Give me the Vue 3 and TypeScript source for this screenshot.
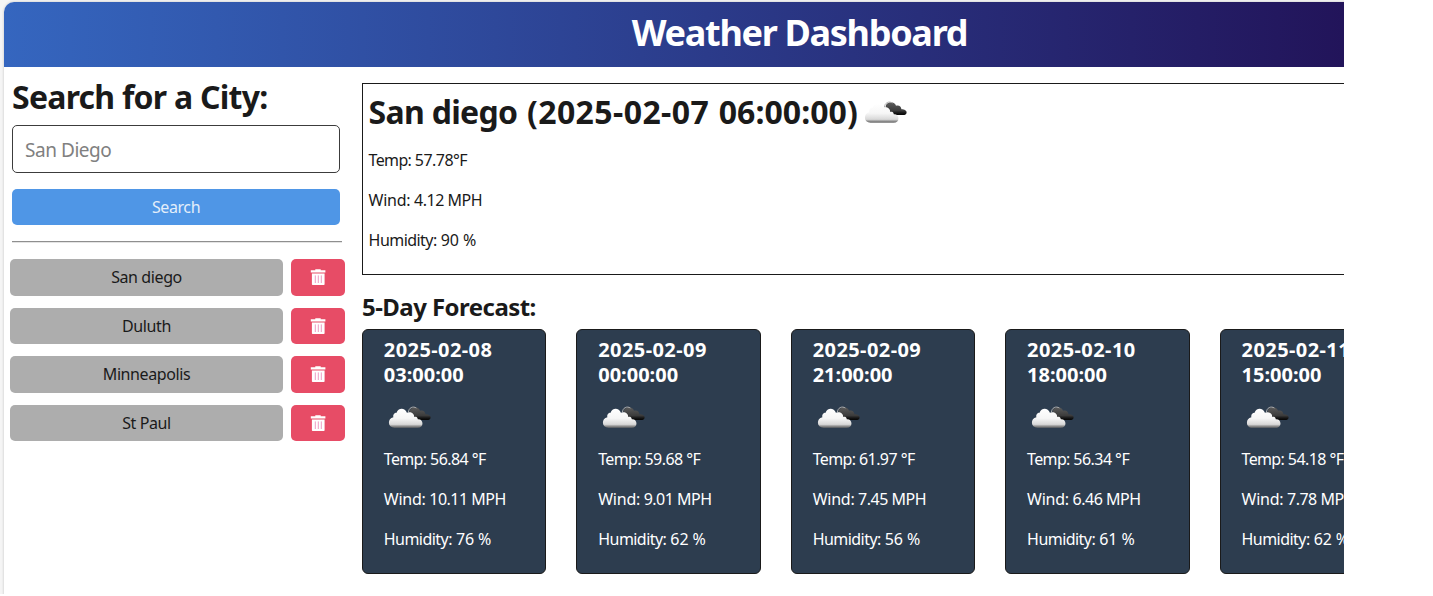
<script setup lang="ts">
interface Forecast {
  day: string
  time: string
  temp: string
  wind: string
  humidity: string
}

const history: string[] = ['San diego', 'Duluth', 'Minneapolis', 'St Paul']

const forecasts: Forecast[] = [
  { day: '2025-02-08', time: '03:00:00', temp: '56.84', wind: '10.11', humidity: '76' },
  { day: '2025-02-09', time: '00:00:00', temp: '59.68', wind: '9.01', humidity: '62' },
  { day: '2025-02-09', time: '21:00:00', temp: '61.97', wind: '7.45', humidity: '56' },
  { day: '2025-02-10', time: '18:00:00', temp: '56.34', wind: '6.46', humidity: '61' },
  { day: '2025-02-11', time: '15:00:00', temp: '54.18', wind: '7.78', humidity: '62' },
]
</script>

<template>
  <div class="viewport">
    <svg class="defs" width="0" height="0" aria-hidden="true">
      <defs>
        <linearGradient id="cloud-light" x1="0" y1="0" x2="0" y2="1">
          <stop offset="0" stop-color="#ffffff" />
          <stop offset="0.5" stop-color="#f6f6f6" />
          <stop offset="0.82" stop-color="#d8d8d8" />
          <stop offset="0.92" stop-color="#8c8c8c" />
          <stop offset="1" stop-color="#6a6a6a" />
        </linearGradient>
        <linearGradient id="cloud-dark" x1="0" y1="0" x2="0" y2="1">
          <stop offset="0" stop-color="#5c5c5c" />
          <stop offset="0.65" stop-color="#3c3c3c" />
          <stop offset="0.85" stop-color="#151515" />
          <stop offset="1" stop-color="#050505" />
        </linearGradient>
        <symbol id="clouds" viewBox="0 0 50 50">
          <path d="M26 22C24.5 17 28.5 15 31.5 15.2C34 15.4 35.6 17 36 18.8C39 17.8 41.2 19.6 41.4 22.2C44.6 22.2 46.8 23.6 46.6 25.4C46.5 27.2 45 28 43 28H33Z" fill="url(#cloud-dark)" />
          <path d="M24.4 20.5C24.6 15.6 29 13.8 32.4 16" fill="none" stroke="#b0b0b0" stroke-width="1" />
          <path d="M10.5 35.8C3.3 35.8 3.2 26.4 9.4 25.3C8.6 22.6 10.8 20.6 12.6 20.8C14 15.6 21 15.4 22.9 20.8C26 19 30.4 21 30.2 25C31.6 24.6 33.4 24.8 33.8 27.2C39.6 26.6 40.6 35.8 33.6 35.8Z" fill="url(#cloud-light)" />
        </symbol>
      </defs>
    </svg>
    <div class="app">
      <header class="banner"><h1>Weather Dashboard</h1></header>
      <div class="body">
        <aside class="sidebar">
          <h2 class="search-title">Search for a City:</h2>
          <input class="city-input" type="text" placeholder="San Diego" />
          <button class="search-btn" type="button">Search</button>
          <div class="divider"></div>
          <div class="history">
            <div v-for="city in history" :key="city" class="history-row">
              <button class="city-btn" type="button">{{ city }}</button>
              <button class="delete-btn" type="button" aria-label="Delete">
                <svg width="16" height="18" viewBox="0 0 16 18">
                  <path d="M5.3 1.2H10.7V2.2H15.4V4.4H0.8V2.2H5.3Z" fill="#fff" />
                  <path d="M1.9 5.4H14.6V16.2Q14.6 17 13.8 17H2.7Q1.9 17 1.9 16.2Z" fill="#fff" />
                  <path d="M5.3 7.4V15M8.3 7.4V15M11.3 7.4V15" stroke="#ee9cc4" stroke-width="1" />
                </svg>
              </button>
            </div>
          </div>
        </aside>
        <main class="content">
          <section class="today">
            <h2 class="today-title">
              <span class="today-name">San diego <span class="today-date">(2025-02-07</span> <span class="today-time">06:00:00)</span></span>
              <svg class="today-icon" width="50" height="50"><use href="#clouds" /></svg>
            </h2>
            <p class="temp"><span>Temp:</span> 57.78°F</p>
            <p class="wind"><span>Wind:</span> 4.12 MPH</p>
            <p class="humidity"><span>Humidity:</span> 90 %</p>
          </section>
          <h3 class="forecast-title">5-Day Forecast:</h3>
          <section class="cards">
            <article v-for="f in forecasts" :key="f.day + f.time" class="card">
              <h4><span class="card-day">{{ f.day }}</span><br />{{ f.time }}</h4>
              <svg class="card-icon" width="50" height="50"><use href="#clouds" /></svg>
              <p class="temp"><span>Temp:</span> {{ f.temp }} °F</p>
              <p class="wind"><span>Wind:</span> {{ f.wind }} MPH</p>
              <p class="humidity"><span>Humidity:</span> {{ f.humidity }} %</p>
            </article>
          </section>
        </main>
      </div>
    </div>
  </div>
</template>

<style>
body {
  margin: 0;
  background: #fff;
}
</style>

<style scoped>
* {
  box-sizing: border-box;
}
.defs {
  position: absolute;
}
.viewport {
  width: 1344px;
  height: 594px;
  padding: 2px 0 0 4px;
  overflow: hidden;
  background: #f5f5f5;
  font-family: 'Noto Sans', 'Open Sans', sans-serif;
  font-size: 16px;
  line-height: 24px;
  color: #1a1a1a;
}
.app {
  width: 1591px;
  height: 640px;
  background: #fff;
  border-radius: 10px 0 0 0;
  overflow: hidden;
  box-shadow: 0 0 3px rgba(0, 0, 0, 0.2);
}
h1, h2, h3, h4, p {
  margin: 0;
  white-space: nowrap;
}
.banner {
  height: 65px;
  display: flex;
  justify-content: center;
  background: linear-gradient(90deg, #3566bf 0, #22145a 1340px);
}
h1 {
  color: #fff;
  font-size: 36px;
  line-height: 62px;
  letter-spacing: -1.3px;
}
.body {
  display: flex;
}
.sidebar {
  width: 358px;
  padding: 10px 17px 0 6px;
  display: flex;
  flex-direction: column;
}
.search-title {
  margin-left: 2px;
  font-size: 32px;
  line-height: 40px;
  letter-spacing: -0.75px;
}
.city-input {
  width: 328px;
  height: 48px;
  margin: 8px 0 0 2px;
  padding: 2px 12px 0 12px;
  border: 1px solid #3c3c3c;
  border-radius: 5px;
  background: #fff;
  font: 400 19px/30px 'Noto Sans', sans-serif;
  letter-spacing: -0.45px;
}
.city-input::placeholder {
  color: #808080;
}
button {
  padding: 0;
  border: 0;
  border-radius: 5px;
  font: inherit;
  letter-spacing: -0.4px;
  color: #1a1a1a;
}
.search-btn {
  width: 328px;
  height: 36px;
  margin: 16px 0 0 2px;
  background: #4f96e6;
  color: #e3eefa;
}
.divider {
  width: 330px;
  height: 2px;
  margin: 16px 0 16px 2px;
  border-top: 1px solid #8f8f8f;
  background: #e4e4e4;
}
.history {
  display: flex;
  flex-direction: column;
  gap: 12px;
}
.history-row {
  display: flex;
  gap: 8px;
  height: 36.5px;
}
.city-btn {
  width: 273px;
  background: #adadad;
}
.delete-btn {
  width: 54px;
  display: flex;
  align-items: center;
  justify-content: center;
  background: #e74c66;
}
.content {
  flex: 1;
  padding-top: 16px;
}
.today {
  height: 192px;
  padding: 3px 5.6px;
  border: 1px solid #1a1a1a;
}
.today-title {
  height: 50px;
  display: flex;
  align-items: center;
  font-size: 32px;
  line-height: 50px;
  letter-spacing: -0.7px;
}
.today-name {
  height: 50px;
}
.today-date {
  margin-left: 2px;
  letter-spacing: 0.4px;
}
.today-time {
  letter-spacing: 0.05px;
  margin-left: 2px;
}
.today-icon {
  margin-left: 2px;
}
.today p {
  margin: 11px 0 16px;
}
.today p + p {
  margin-top: 0;
}
.forecast-title {
  margin-top: 17px;
  font-size: 24px;
  line-height: 30px;
  letter-spacing: -0.55px;
}
.cards {
  display: flex;
  gap: 30px;
  margin-top: 7px;
}
.card {
  flex: 0 0 184.45px;
  height: 245px;
  padding: 7px 0 0 20.8px;
  border: 1px solid #1a1a1a;
  border-radius: 6px;
  background: #2d3d4f;
  color: #fff;
}
h4 {
  font-size: 20px;
  line-height: 25px;
  letter-spacing: 0;
}
.card-day {
  letter-spacing: 0.42px;
}
.card-icon {
  display: block;
  margin-top: 5px;
}
.card p {
  margin-bottom: 16px;
}
.card-icon + p {
  margin-top: 5px;
}
.temp {
  letter-spacing: -0.55px;
}
.temp span {
  letter-spacing: -0.65px;
}
.wind {
  letter-spacing: -0.5px;
}
.wind span {
  letter-spacing: -0.25px;
}
.humidity {
  letter-spacing: -0.1px;
}
.humidity span {
  letter-spacing: -0.55px;
}
</style>
